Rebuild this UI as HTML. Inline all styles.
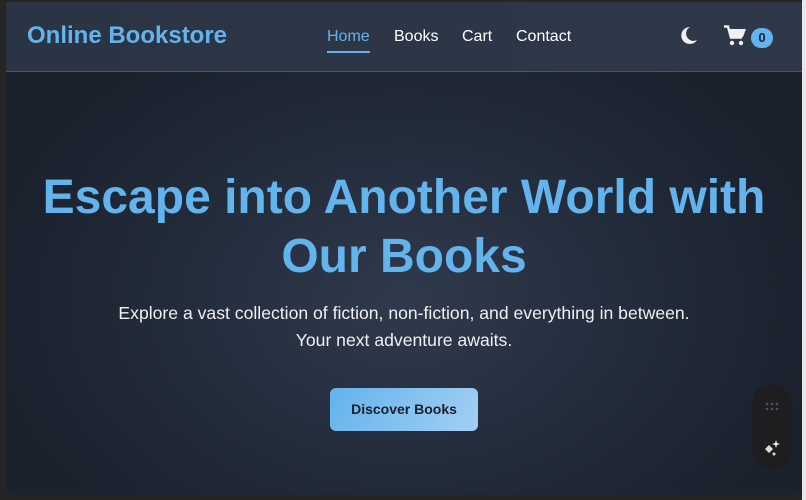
<!DOCTYPE html>
<html><head><style>
*{margin:0;padding:0;box-sizing:border-box}
body{width:806px;height:500px;background:#252525;overflow:hidden;font-family:"Liberation Sans",sans-serif;position:relative}
.page{position:absolute;left:6px;top:2px;width:796px;height:493px;border-radius:0 0 8px 8px;overflow:hidden;background:radial-gradient(ellipse 420px 300px at 400px 300px,#2f3a4d 0%,#232c3b 55%,#1b212d 100%)}
.sb{position:absolute;left:802px;top:0;width:4px;height:500px;background:#e8e8e8}
nav{position:absolute;left:0;top:0;width:796px;height:70px;background:linear-gradient(90deg,#2a3444,#2e3849);border-bottom:1px solid #4a5568}
.logo{position:absolute;left:21px;top:20px;font-size:24px;font-weight:bold;color:#63b3ed}
.links{position:absolute;top:26px;font-size:16px;color:#fff}
.links a{position:absolute;white-space:nowrap;color:#fff;text-decoration:none}
.home{color:#63b3ed!important}
.ul{position:absolute;left:321px;top:49px;width:43px;height:2px;background:#63b3ed}
.badge{position:absolute;left:745px;top:26px;width:22px;height:20px;border-radius:10px;background:#63b3ed;color:#1a202c;font-size:13px;text-align:center;line-height:20px;font-weight:bold}
h1{position:absolute;left:0;width:796px;top:166px;text-align:center;font-size:48px;line-height:59px;font-weight:bold;color:#63b3ed}
p{position:absolute;left:0;width:796px;top:298px;text-align:center;font-size:17.6px;line-height:27px;color:#f0f0f0}
.btn{position:absolute;left:324px;top:386px;width:148px;height:43px;border-radius:6px;background:linear-gradient(120deg,#63b3ed,#a3cff3);color:#1a202c;font-weight:bold;font-size:14px;text-align:center;line-height:43px}
.wid{position:absolute;left:752px;top:384px;width:40px;height:86px;border-radius:20px;background:#1e1e20}
</style></head><body>
<div class="page">
<nav>
<div class="logo">Online Bookstore</div>
<div class="links"><a class="home" style="left:321px">Home</a><a style="left:388px">Books</a><a style="left:456px">Cart</a><a style="left:510px">Contact</a></div>
<div class="ul"></div>
<svg style="position:absolute;left:674px;top:24px" width="18" height="18" viewBox="0 0 18 18"><path d="M10 1A8.5 8.5 0 1 0 17 14A7 7 0 0 1 10 1Z" fill="#f0f0f0"/></svg>
<svg style="position:absolute;left:718px;top:23px" width="23" height="21" viewBox="0 0 23 21"><path d="M0 1.5h4l3 11h11" fill="none" stroke="#f0f0f0" stroke-width="2.5"/><path d="M5 4h17l-3 8H7z" fill="#f0f0f0"/><circle cx="8" cy="18" r="2.2" fill="#f0f0f0"/><circle cx="17" cy="18" r="2.2" fill="#f0f0f0"/></svg>
<div class="badge">0</div>
</nav>
<h1>Escape into Another World with<br>Our Books</h1>
<p>Explore a vast collection of fiction, non-fiction, and everything in between.<br>Your next adventure awaits.</p>
<div class="btn">Discover Books</div>
</div>
<div class="wid">
<svg style="position:absolute;left:13px;top:18px" width="14" height="10"><g fill="#5a4a5a"><circle cx="2" cy="2" r="1.3"/><circle cx="7" cy="2" r="1.3"/><circle cx="12" cy="2" r="1.3"/><circle cx="2" cy="7" r="1.3"/><circle cx="7" cy="7" r="1.3"/><circle cx="12" cy="7" r="1.3"/></g></svg>
<svg style="position:absolute;left:11px;top:55px" width="20" height="20" viewBox="0 0 20 20"><path d="M6 6l4 4-4 4-4-4z" fill="#ddd"/><path d="M13 1l1 3 3 1-3 1-1 3-1-3-3-1 3-1z" fill="#eee"/><circle cx="11" cy="15" r="1.5" fill="#ddd"/></svg>
</div>
<div class="sb"></div>
</body></html>
